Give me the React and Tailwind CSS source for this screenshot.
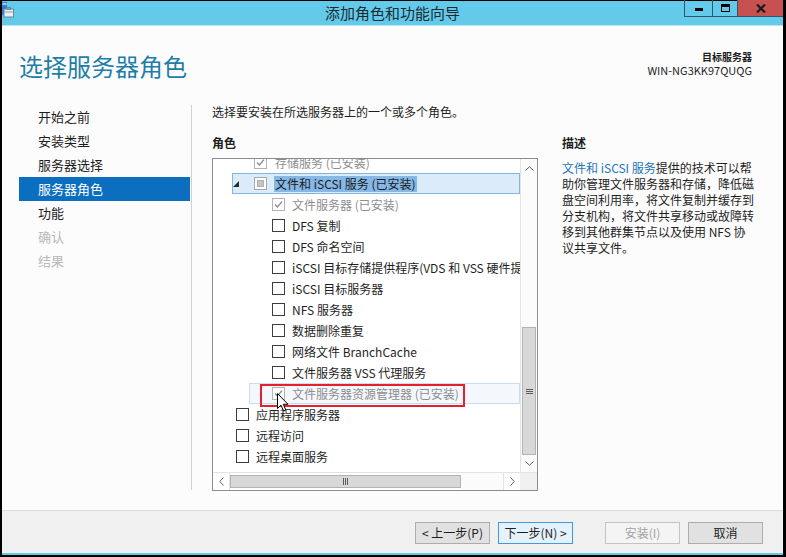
import React from 'react';

const Box = ({ state = 'off' }) => {
  if (state === 'partial') {
    return (
      <span className="w-[13px] h-[13px] shrink-0 border border-[#a8a8a8] bg-white flex items-center justify-center">
        <span className="w-[7px] h-[7px] bg-[#c4c4c4] border border-[#b0b0b0]" />
      </span>
    );
  }
  if (state === 'done') {
    return (
      <span className="w-[13px] h-[13px] shrink-0 border border-[#b4b4b4] bg-white flex items-center justify-center">
        <svg width="11" height="11" viewBox="0 0 11 11">
          <path d="M2 5.6 L4.4 8 L9 2.6" fill="none" stroke="#8c8c8c" strokeWidth="1.4" />
        </svg>
      </span>
    );
  }
  return <span className="w-[13px] h-[13px] shrink-0 border border-[#3d3d3d] bg-white" />;
};

const Child = ({ label, state, gray }) => (
  <div className="h-[21px] flex items-center pl-[59px] gap-[7px]">
    <Box state={state} />
    <span className={gray ? 'text-[#8d8d8d]' : 'text-[#1e1e1e]'}>{label}</span>
  </div>
);

const Top = ({ label }) => (
  <div className="h-[21px] flex items-center pl-[23px] gap-[7px]">
    <Box />
    <span className="text-[#1e1e1e]">{label}</span>
  </div>
);

const navItems = [
  { label: '开始之前' },
  { label: '安装类型' },
  { label: '服务器选择' },
  { label: '服务器角色', active: true },
  { label: '功能' },
  { label: '确认', off: true },
  { label: '结果', off: true },
];

const Btn = ({ children, kind }) => {
  const styles = {
    normal: 'bg-[#e1e1e1] border-[#adadad] text-[#1e1e1e]',
    primary: 'bg-[#e5f1fb] border-[#3c9be4] text-[#1e1e1e]',
    disabled: 'bg-[#f4f4f4] border-[#c4c4c4] text-[#a3a3a3]',
  };
  return (
    <div className={`w-[75px] h-[22px] border flex items-center justify-center text-[12px] leading-none ${styles[kind || 'normal']}`}>
      {children}
    </div>
  );
};

export default function App() {
  return (
    <div className="w-[786px] h-[557px] bg-black pl-[2px] pr-[3px] pt-px pb-[2px] font-['Noto_Sans_CJK_SC','Noto_Sans',sans-serif] overflow-hidden">
      <div className="h-full flex flex-col bg-[#fcfcfc]">
        {/* title bar */}
        <div className="h-[24px] shrink-0 bg-[#63caea] grid grid-cols-[1fr_auto_1fr]">
          <div className="pt-[1px]">
            <svg width="12" height="16" viewBox="0 0 12 16">
              <rect x="0" y="0" width="5" height="13" fill="#2f7fd0" />
              <rect x="0.5" y="1" width="4" height="2" fill="#9fd0f5" />
              <rect x="2" y="7" width="9.5" height="8" fill="#e9eef2" stroke="#6f8594" strokeWidth="1" />
              <rect x="5" y="5.5" width="3.5" height="2" fill="none" stroke="#6f8594" strokeWidth="1" />
              <line x1="2" y1="10" x2="11.5" y2="10" stroke="#8fa3b0" strokeWidth="1" />
            </svg>
          </div>
          <div className="text-[15px] leading-[24px] text-[#1d2a30]">添加角色和功能向导</div>
          <div className="flex justify-end items-start -mt-px">
            <div className="w-[28px] h-[17px] border-l border-b border-[#2c5a6a] flex items-center justify-center">
              <span className="w-[8px] h-[3px] bg-black mt-[2px]" />
            </div>
            <div className="w-[25px] h-[17px] border-l border-b border-[#2c5a6a] flex items-center justify-center">
              <span className="w-[9px] h-[8px] border border-black border-t-[3px]" />
            </div>
            <div className="w-[46px] h-[17px] bg-[#c75050] border-l border-b border-[#2c5a6a] flex items-center justify-center">
              <svg width="10" height="9" viewBox="0 0 10 9">
                <path d="M1 0.5 L9 8.5 M9 0.5 L1 8.5" stroke="#1a1a1a" strokeWidth="2.2" />
              </svg>
            </div>
          </div>
        </div>
        <div className="h-px shrink-0 bg-[#b8e6f5]" />

        {/* content */}
        <div className="flex-1 flex flex-col">
          {/* header */}
          <div className="h-[79px] shrink-0 flex justify-between items-start pt-[25px] pl-[17px] pr-[31px]">
            <div className="text-[24px] leading-[30px] text-[#1d7ea8]">选择服务器角色</div>
            <div className="text-right text-[#1e1e1e]">
              <div className="font-bold text-[10px] leading-[11px] h-[13px]">目标服务器</div>
              <div className="text-[11px] leading-[12px]">WIN-NG3KK97QUQG</div>
            </div>
          </div>

          {/* body */}
          <div className="flex-1 flex">
            <div className="ml-[17px] w-[173px] h-[385px] border-r border-[#d0d0d0] pr-px">
              {navItems.map((n) => (
                <div
                  key={n.label}
                  className={`h-[24px] pl-[19px] flex items-center text-[13px] ${
                    n.active ? 'bg-[#0b6ebf] text-white' : n.off ? 'text-[#b9b9b9]' : 'text-[#1e1e1e]'
                  }`}
                >
                  {n.label}
                </div>
              ))}
            </div>

            {/* roles column */}
            <div className="ml-[20px] w-[326px] flex flex-col text-[12px]">
              <div className="leading-[14px] text-[#1e1e1e]">选择要安装在所选服务器上的一个或多个角色。</div>
              <div className="mt-[16px] leading-[16px] font-bold text-[#1e1e1e]">角色</div>
              <div className="mt-[7px] w-[326px] h-[333px] border border-[#8a8d93] flex flex-col bg-white">
                <div className="flex h-[313px]">
                  <div className="w-[307px] h-full overflow-hidden whitespace-nowrap leading-[16px]">
                    <div className="-mt-[7px]">
                      <div className="h-[21px] flex items-center pl-[41px] gap-[8px]">
                        <Box state="done" />
                        <span className="text-[#8d8d8d]">存储服务 (已安装)</span>
                      </div>
                      <div className="h-[21px] flex">
                        <div className="ml-[19px] flex-1 h-[21px] border border-[#7fb5ea] bg-[#dcebfa] flex items-center">
                          <svg width="6" height="6" viewBox="0 0 6 6" className="shrink-0">
                            <path d="M6 0 L6 6 L0 6 Z" fill="#2b2b2b" />
                          </svg>
                          <span className="ml-[15px]">
                            <Box state="partial" />
                          </span>
                          <span className="ml-[7px] px-px bg-[#86b8e6] text-[#1a1a1a] leading-[16px]">文件和 iSCSI 服务 (已安装)</span>
                        </div>
                      </div>
                      <Child label="文件服务器 (已安装)" state="done" gray />
                      <Child label="DFS 复制" />
                      <Child label="DFS 命名空间" />
                      <Child label="iSCSI 目标存储提供程序(VDS 和 VSS 硬件提供程序)" />
                      <Child label="iSCSI 目标服务器" />
                      <Child label="NFS 服务器" />
                      <Child label="数据删除重复" />
                      <Child label="网络文件 BranchCache" />
                      <Child label="文件服务器 VSS 代理服务" />
                      <div className="h-[21px] flex relative">
                        <div className="ml-[36px] flex-1 h-[21px] border border-[#c6ddf4] bg-[#f4f8fd] flex items-center pl-[22px] gap-[7px]">
                          <Box state="done" />
                          <span className="text-[#8d8d8d]">文件服务器资源管理器 (已安装)</span>
                        </div>
                        <div className="absolute left-[47px] top-[1px] w-[205px] h-[23px] border-2 border-[#e3202c]" />
                        <svg width="12" height="19" viewBox="0 0 12 19" className="absolute left-[64px] top-[10px]">
                          <path d="M0.5 0.5 L0.5 15.5 L4 12.2 L6.6 18 L8.8 17 L6.3 11.3 L11 11.3 Z" fill="white" stroke="black" strokeWidth="1" />
                        </svg>
                      </div>
                      <Top label="应用程序服务器" />
                      <Top label="远程访问" />
                      <Top label="远程桌面服务" />
                    </div>
                  </div>
                  {/* vertical scrollbar */}
                  <div className="w-[17px] h-full border-l border-[#e3e3e3] bg-[#fbfbfb] flex flex-col">
                    <div className="h-[18px] flex items-center justify-center">
                      <svg width="9" height="5" viewBox="0 0 9 5"><path d="M0.5 4.5 L4.5 0.8 L8.5 4.5" fill="none" stroke="#606060" /></svg>
                    </div>
                    <div className="flex-1 flex flex-col justify-end">
                      <div className="h-[128px] mx-px bg-[#d8d8d8] border border-[#b3b3b3] flex items-center justify-center">
                        <svg width="7" height="7" viewBox="0 0 7 7">
                          <path d="M0 1.5 H7 M0 3.5 H7 M0 5.5 H7" stroke="#5a5a5a" strokeWidth="1" />
                        </svg>
                      </div>
                    </div>
                    <div className="h-[17px] flex items-center justify-center">
                      <svg width="9" height="5" viewBox="0 0 9 5"><path d="M0.5 0.5 L4.5 4.2 L8.5 0.5" fill="none" stroke="#606060" /></svg>
                    </div>
                  </div>
                </div>
                {/* horizontal scrollbar */}
                <div className="flex-1 flex border-t border-[#e3e3e3]">
                  <div className="w-[17px] flex items-center justify-center border-r border-[#e3e3e3]">
                    <svg width="5" height="9" viewBox="0 0 5 9"><path d="M4.5 0.5 L0.8 4.5 L4.5 8.5" fill="none" stroke="#606060" /></svg>
                  </div>
                  <div className="w-[231px] my-[2px] bg-[#d8d8d8] border border-[#b3b3b3] flex items-center justify-center">
                    <svg width="7" height="7" viewBox="0 0 7 7">
                      <path d="M1.5 0 V7 M3.5 0 V7 M5.5 0 V7" stroke="#5a5a5a" strokeWidth="1" />
                    </svg>
                  </div>
                  <div className="flex-1 bg-[#fbfbfb]" />
                  <div className="w-[17px] flex items-center justify-center border-l border-[#e3e3e3]">
                    <svg width="5" height="9" viewBox="0 0 5 9"><path d="M0.5 0.5 L4.2 4.5 L0.5 8.5" fill="none" stroke="#606060" /></svg>
                  </div>
                  <div className="w-[17px] bg-[#f0f0f0]" />
                </div>
              </div>
            </div>

            {/* description */}
            <div className="ml-[24px] pt-[30px] text-[12px] text-[#1e1e1e]">
              <div className="leading-[16px] font-bold">描述</div>
              <div className="mt-[9px] leading-[16px] whitespace-nowrap">
                <div><span className="text-[#1c74bb]">文件和 iSCSI 服务</span>提供的技术可以帮</div>
                <div>助你管理文件服务器和存储，降低磁</div>
                <div>盘空间利用率，将文件复制并缓存到</div>
                <div>分支机构，将文件共享移动或故障转</div>
                <div>移到其他群集节点以及使用 NFS 协</div>
                <div>议共享文件。</div>
              </div>
            </div>
          </div>
        </div>

        {/* bottom bar */}
        <div className="h-[43px] shrink-0 bg-[#f0f0f0] border-t border-[#dcdcdc] flex justify-end items-start pt-[11px] pr-[20px]">
          <Btn>&lt; 上一步(P)</Btn>
          <div className="ml-[8px]">
            <Btn kind="primary">下一步(N) &gt;</Btn>
          </div>
          <div className="ml-[32px]">
            <Btn kind="disabled">安装(I)</Btn>
          </div>
          <div className="ml-[8px]">
            <Btn>取消</Btn>
          </div>
        </div>
        <div className="h-[2px] shrink-0 bg-[#63caea]" />
      </div>
    </div>
  );
}
